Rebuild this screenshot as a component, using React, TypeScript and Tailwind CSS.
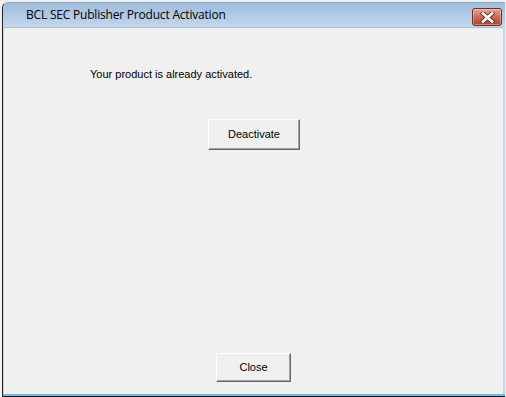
export default function App() {
  return (
    <div className="w-[506px] h-[397px] bg-[#f0f0f0] pt-[2px] pl-[2px] overflow-hidden">
      <div className="w-[503px] h-[395px] flex flex-col border-l border-[#1f1f1f] rounded-tl-[6px] border-t border-t-[#8da9c8] overflow-hidden bg-[#c3d6ec]">
        <div
          className="h-[24px] flex items-center justify-between pl-[23px] pr-[3px] bg-gradient-to-b from-[#9fbcdc] to-[#c3d7ec] text-[12px] text-black"
          style={{ fontFamily: '"Segoe UI", "Open Sans", sans-serif' }}
        >
          <span className="tracking-[-0.2px]">BCL SEC Publisher Product Activation</span>
          <div className="w-[30px] h-[18px] mt-[4px] rounded-[3px] border border-[#6b2e2a] bg-gradient-to-b from-[#e7a596] via-[#cf6a55] to-[#b43c2a] flex items-center justify-center shadow-[inset_0_0_0_1px_rgba(255,255,255,0.35)]">
            <svg width="15" height="11" viewBox="0 0 15 11">
              <path d="M3 1.5 L12 9.5 M12 1.5 L3 9.5" stroke="#5a2a24" strokeWidth="4.5" strokeLinecap="square" />
              <path d="M3 1.5 L12 9.5 M12 1.5 L3 9.5" stroke="#ffffff" strokeWidth="2.8" strokeLinecap="square" />
            </svg>
          </div>
        </div>
        <div className="flex-1 flex flex-col ml-[1px] mr-[2px] border-t border-[#a9bdd3] bg-[#f0f0f0] text-[11px] text-black" style={{ fontFamily: '"Liberation Sans", sans-serif' }}>
          <p className="mt-[40px] ml-[86px] leading-[13px]">
            Your product is already activated.
          </p>
          <div className="mt-[38px] ml-[204px]">
            <button className="w-[92px] h-[31px] bg-[#f0f0f0] border border-t-white border-l-white border-r-[#696969] border-b-[#696969] shadow-[inset_-1px_-1px_0_#a0a0a0] text-[11px]">
              Deactivate
            </button>
          </div>
          <div className="mt-[203px] ml-[212px]">
            <button className="w-[75px] h-[29px] bg-[#f0f0f0] border border-t-white border-l-white border-r-[#696969] border-b-[#696969] shadow-[inset_-1px_-1px_0_#a0a0a0] text-[11px]">
              Close
            </button>
          </div>
          <div className="flex-1" />
        </div>
        <div className="h-[2px] bg-[#6fb9e6]" />
        <div className="h-[1px] bg-[#1a1a1a]" />
      </div>
    </div>
  );
}
